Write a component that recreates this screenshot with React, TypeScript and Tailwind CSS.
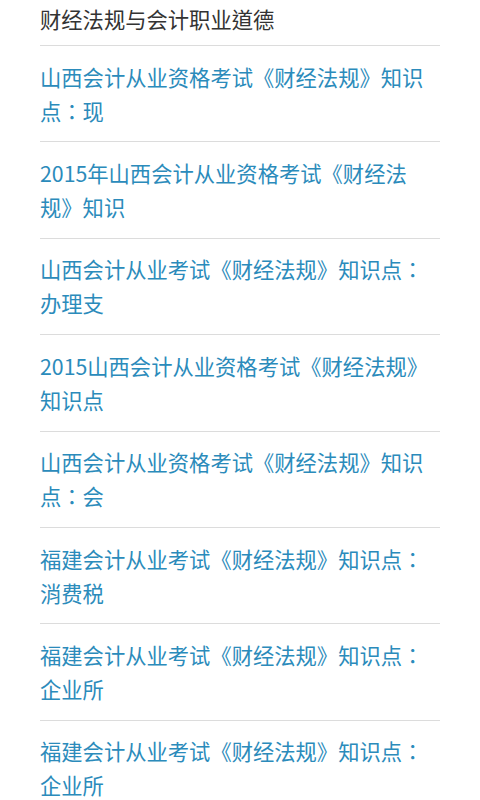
const items = [
  "山西会计从业资格考试《财经法规》知识点：现",
  "2015年山西会计从业资格考试《财经法规》知识",
  "山西会计从业考试《财经法规》知识点：办理支",
  "2015山西会计从业资格考试《财经法规》知识点",
  "山西会计从业资格考试《财经法规》知识点：会",
  "福建会计从业考试《财经法规》知识点：消费税",
  "福建会计从业考试《财经法规》知识点：企业所",
  "福建会计从业考试《财经法规》知识点：企业所",
];

export default function App() {
  return (
    <div
      className="min-h-screen w-full bg-white px-[40px] text-[21.3px] leading-[34px] [text-spacing-trim:space-all]"
      style={{ fontFamily: '"Noto Sans CJK TC", "Noto Sans CJK SC", "Noto Sans", sans-serif' }}
    >
      <div className="w-[400px]">
        <h1 className="pt-[2px] pb-[9px] font-normal text-[#333333]">
          财经法规与会计职业道德
        </h1>
        <ul>
          {items.map((text, i) => (
            <li
              key={i}
              className="border-t border-[#dcdcdc] py-[13.7px] text-[#2b8bbb]"
            >
              {text}
            </li>
          ))}
        </ul>
      </div>
    </div>
  );
}
